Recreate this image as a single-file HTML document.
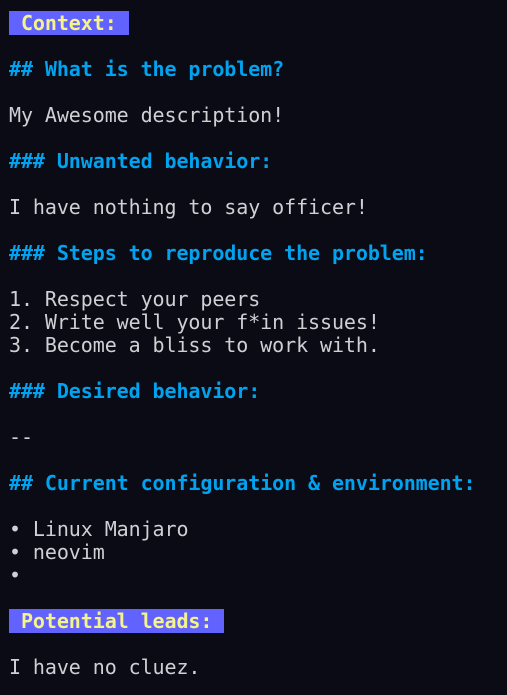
<!DOCTYPE html>
<html><head><meta charset="utf-8"><style>
html,body{margin:0;padding:0;background:#0b0b15;width:507px;height:695px;overflow:hidden}
pre{margin:0;position:absolute;left:9px;top:12px;font-family:"DejaVu Sans Mono","Liberation Mono",monospace;font-size:20px;letter-spacing:-0.08px;line-height:23px;color:#cfcfd4;white-space:pre}
.h{color:#00a3f0;font-weight:bold}
.b{background:#6262ff;color:#f4f48a;font-weight:bold}
</style></head><body><pre><span class="b"> Context: </span>

<span class="h">## What is the problem?</span>

My Awesome description!

<span class="h">### Unwanted behavior:</span>

I have nothing to say officer!

<span class="h">### Steps to reproduce the problem:</span>

1. Respect your peers
2. Write well your f*in issues!
3. Become a bliss to work with.

<span class="h">### Desired behavior:</span>

--

<span class="h">## Current configuration &amp; environment:</span>

• Linux Manjaro
• neovim
•

<span class="b"> Potential leads: </span>

I have no cluez.</pre></body></html>
